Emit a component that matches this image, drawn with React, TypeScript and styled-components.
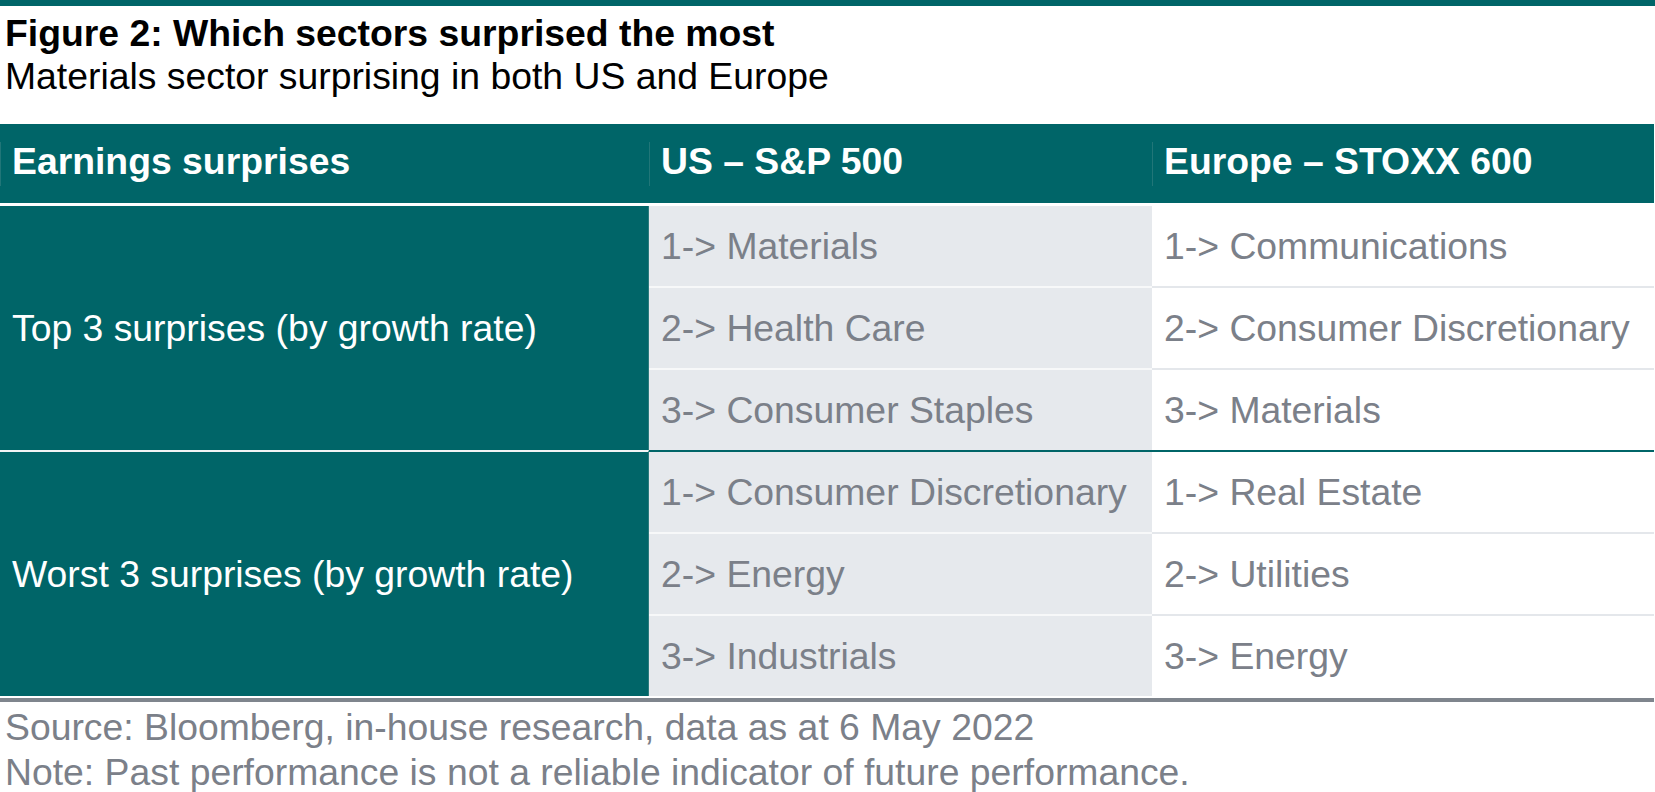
import React from 'react';
import styled, { createGlobalStyle } from 'styled-components';

const TEAL = '#006568';
const GREY_TEXT = '#7b8089';
const GREY_CELL = '#e6e9ed';

const GlobalStyle = createGlobalStyle`
  html, body {
    margin: 0;
    padding: 0;
    background: #ffffff;
    overflow: hidden;
  }
  body {
    font-family: 'Liberation Sans', Arial, Helvetica, sans-serif;
  }
`;

const Page = styled.div`
  width: 1655px;
  display: flex;
  flex-direction: column;
  font-size: 37.33px;
  line-height: 43px;
`;

const TopRule = styled.div`
  height: 6px;
  background: ${TEAL};
`;

const Heading = styled.header`
  display: flex;
  flex-direction: column;
  padding: 5.6px 0 0 5px;
`;

const Title = styled.h1`
  margin: 0;
  font-size: inherit;
  line-height: inherit;
  font-weight: 700;
  color: #000;
`;

const Subtitle = styled.div`
  color: #000;
`;

const Table = styled.div`
  margin-top: 26.7px;
  width: 1654px;
  display: flex;
  flex-direction: column;
`;

const HeaderRow = styled.div`
  display: grid;
  grid-template-columns: 649px 503px 502px;
  height: 79px;
  background: ${TEAL};
  border-bottom: 3px solid #fff;
`;

const HeaderCell = styled.div`
  position: relative;
  box-sizing: border-box;
  padding: 15.6px 0 0 12px;
  color: #fff;
  font-weight: 700;
  white-space: nowrap;
  &::before {
    content: '';
    position: absolute;
    left: 0;
    top: 18px;
    bottom: 17px;
    width: 1px;
    background: #217678;
  }
`;

const Group = styled.div`
  display: grid;
  grid-template-columns: 649px 503px 502px;
  grid-template-rows: repeat(3, auto);
`;

const LabelCell = styled.div<{ $first?: boolean }>`
  grid-column: 1;
  grid-row: 1 / span 3;
  display: flex;
  align-items: center;
  padding-left: 12px;
  background: ${TEAL};
  color: #fff;
  border-top: ${({ $first }) => ($first ? 'none' : '2px solid #f2f4f5')};
  border-right: 1px solid #2b7b7d;
  white-space: nowrap;
`;

const ValueCell = styled.div<{ $col: 2 | 3; $sep: 'none' | 'row' | 'group' }>`
  grid-column: ${({ $col }) => $col};
  height: 80px;
  display: flex;
  align-items: center;
  padding-left: 12px;
  background: ${({ $col }) => ($col === 2 ? GREY_CELL : '#fff')};
  color: ${GREY_TEXT};
  white-space: nowrap;
  border-top: ${({ $sep, $col }) =>
    $sep === 'none'
      ? 'none'
      : $sep === 'group'
      ? `2px solid ${TEAL}`
      : `2px solid ${$col === 2 ? '#f7f8f9' : '#e4e7eb'}`};
`;

const BottomRule = styled.div`
  margin-top: 2px;
  height: 4px;
  width: 1654px;
  background: #7f858d;
`;

const Footer = styled.footer`
  display: flex;
  flex-direction: column;
  padding: 2.5px 0 0 5px;
  color: ${GREY_TEXT};
  line-height: 45.5px;
`;

type Group = { label: string; us: string[]; eu: string[] };

const groups: Group[] = [
  {
    label: 'Top 3 surprises (by growth rate)',
    us: ['Materials', 'Health Care', 'Consumer Staples'],
    eu: ['Communications', 'Consumer Discretionary', 'Materials'],
  },
  {
    label: 'Worst 3 surprises (by growth rate)',
    us: ['Consumer Discretionary', 'Energy', 'Industrials'],
    eu: ['Real Estate', 'Utilities', 'Energy'],
  },
];

export default function App() {
  return (
    <Page>
      <GlobalStyle />
      <TopRule />
      <Heading>
        <Title>Figure 2: Which sectors surprised the most</Title>
        <Subtitle>Materials sector surprising in both US and Europe</Subtitle>
      </Heading>
      <Table>
        <HeaderRow>
          <HeaderCell>Earnings surprises</HeaderCell>
          <HeaderCell>US – S&amp;P 500</HeaderCell>
          <HeaderCell>Europe – STOXX 600</HeaderCell>
        </HeaderRow>
        {groups.map((g, gi) => (
          <Group key={g.label}>
            <LabelCell $first={gi === 0}>{g.label}</LabelCell>
            {g.us.map((us, i) => {
              const sep = i > 0 ? 'row' : gi > 0 ? 'group' : 'none';
              return (
                <React.Fragment key={us + i}>
                  <ValueCell $col={2} $sep={sep} style={{ gridRow: i + 1 }}>
                    {i + 1}-&gt; {us}
                  </ValueCell>
                  <ValueCell $col={3} $sep={sep} style={{ gridRow: i + 1 }}>
                    {i + 1}-&gt; {g.eu[i]}
                  </ValueCell>
                </React.Fragment>
              );
            })}
          </Group>
        ))}
      </Table>
      <BottomRule />
      <Footer>
        <div>Source: Bloomberg, in-house research, data as at 6 May 2022</div>
        <div>Note: Past performance is not a reliable indicator of future performance.</div>
      </Footer>
    </Page>
  );
}
